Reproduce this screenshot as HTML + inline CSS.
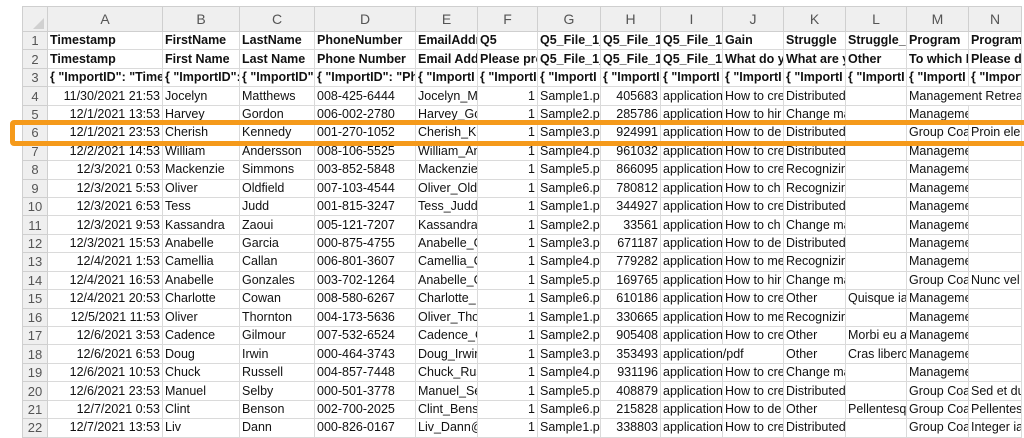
<!DOCTYPE html>
<html><head><meta charset="utf-8"><style>
body{margin:0;width:1024px;height:438px;background:#fff;overflow:hidden;position:relative;font-family:"Liberation Sans",sans-serif}
table{position:absolute;left:22px;top:6px;border-collapse:collapse;table-layout:fixed;width:999px;font-size:12.5px;color:#111}
td{border:1px solid #dadada;height:17.45px;padding:0 2px;white-space:nowrap;overflow:hidden;line-height:17px}
tr.h td{background:#efefef;color:#555;text-align:center;height:24px;font-size:14px;border-color:#cfcfcf}
td.n{background:#efefef;color:#555;text-align:center;font-size:13px;border-color:#cfcfcf}
tr.b td{font-weight:bold}
tr.b td.n{font-weight:normal}
.r{text-align:right}
.box{position:absolute;left:10px;top:120px;width:1030px;height:16px;border:5px solid #f59a1b;border-radius:4px}
.tri{position:absolute;left:33px;top:18px;width:0;height:0;border-left:11px solid transparent;border-bottom:11px solid #d0d0d0}
</style></head><body>
<table>
<colgroup><col style="width:25px"><col style="width:115px"><col style="width:77px"><col style="width:75px"><col style="width:101px"><col style="width:62px"><col style="width:60px"><col style="width:63px"><col style="width:60px"><col style="width:62px"><col style="width:61px"><col style="width:62px"><col style="width:61px"><col style="width:62px"><col style="width:53px"></colgroup>
<tr class="h"><td></td><td>A</td><td>B</td><td>C</td><td>D</td><td>E</td><td>F</td><td>G</td><td>H</td><td>I</td><td>J</td><td>K</td><td>L</td><td>M</td><td>N</td></tr>
<tr class="b"><td class="n">1</td><td>Timestamp</td><td>FirstName</td><td>LastName</td><td>PhoneNumber</td><td>EmailAddress</td><td>Q5</td><td>Q5_File_1_</td><td>Q5_File_1_</td><td>Q5_File_1_</td><td>Gain</td><td>Struggle</td><td>Struggle_O</td><td>Program</td><td>Program_</td></tr>
<tr class="b"><td class="n">2</td><td>Timestamp</td><td>First Name</td><td>Last Name</td><td>Phone Number</td><td>Email Add</td><td>Please pro</td><td>Q5_File_1_</td><td>Q5_File_1_</td><td>Q5_File_1_</td><td>What do y</td><td>What are y</td><td>Other</td><td>To which P</td><td>Please de</td></tr>
<tr class="b"><td class="n">3</td><td>{ "ImportID": "Time</td><td>{ "ImportID":</td><td>{ "ImportID"</td><td>{ "ImportID": "Ph</td><td>{ "ImportI</td><td>{ "ImportI</td><td>{ "ImportI</td><td>{ "ImportI</td><td>{ "ImportI</td><td>{ "ImportI</td><td>{ "ImportI</td><td>{ "ImportI</td><td>{ "ImportI</td><td>{ "ImportI</td></tr>
<tr><td class="n">4</td><td class="r">11/30/2021 21:53</td><td>Jocelyn</td><td>Matthews</td><td>008-425-6444</td><td>Jocelyn_M</td><td class="r">1</td><td>Sample1.p</td><td class="r">405683</td><td>application</td><td>How to cre</td><td>Distributed</td><td></td><td colspan="2">Management Retreat</td></tr>
<tr><td class="n">5</td><td class="r">12/1/2021 13:53</td><td>Harvey</td><td>Gordon</td><td>006-002-2780</td><td>Harvey_Go</td><td class="r">1</td><td>Sample2.p</td><td class="r">285786</td><td>application</td><td>How to hir</td><td>Change ma</td><td></td><td>Manageme</td><td></td></tr>
<tr><td class="n">6</td><td class="r">12/1/2021 23:53</td><td>Cherish</td><td>Kennedy</td><td>001-270-1052</td><td>Cherish_Ke</td><td class="r">1</td><td>Sample3.p</td><td class="r">924991</td><td>application</td><td>How to de</td><td>Distributed</td><td></td><td>Group Coa</td><td>Proin elem</td></tr>
<tr><td class="n">7</td><td class="r">12/2/2021 14:53</td><td>William</td><td>Andersson</td><td>008-106-5525</td><td>William_An</td><td class="r">1</td><td>Sample4.p</td><td class="r">961032</td><td>application</td><td>How to cre</td><td>Distributed</td><td></td><td>Manageme</td><td></td></tr>
<tr><td class="n">8</td><td class="r">12/3/2021 0:53</td><td>Mackenzie</td><td>Simmons</td><td>003-852-5848</td><td>Mackenzie</td><td class="r">1</td><td>Sample5.p</td><td class="r">866095</td><td>application</td><td>How to cre</td><td>Recognizin</td><td></td><td>Manageme</td><td></td></tr>
<tr><td class="n">9</td><td class="r">12/3/2021 5:53</td><td>Oliver</td><td>Oldfield</td><td>007-103-4544</td><td>Oliver_Old</td><td class="r">1</td><td>Sample6.p</td><td class="r">780812</td><td>application</td><td>How to ch</td><td>Recognizin</td><td></td><td>Manageme</td><td></td></tr>
<tr><td class="n">10</td><td class="r">12/3/2021 6:53</td><td>Tess</td><td>Judd</td><td>001-815-3247</td><td>Tess_Judd</td><td class="r">1</td><td>Sample1.p</td><td class="r">344927</td><td>application</td><td>How to cre</td><td>Distributed</td><td></td><td>Manageme</td><td></td></tr>
<tr><td class="n">11</td><td class="r">12/3/2021 9:53</td><td>Kassandra</td><td>Zaoui</td><td>005-121-7207</td><td>Kassandra_</td><td class="r">1</td><td>Sample2.p</td><td class="r">33561</td><td>application</td><td>How to ch</td><td>Change ma</td><td></td><td>Manageme</td><td></td></tr>
<tr><td class="n">12</td><td class="r">12/3/2021 15:53</td><td>Anabelle</td><td>Garcia</td><td>000-875-4755</td><td>Anabelle_G</td><td class="r">1</td><td>Sample3.p</td><td class="r">671187</td><td>application</td><td>How to de</td><td>Distributed</td><td></td><td>Manageme</td><td></td></tr>
<tr><td class="n">13</td><td class="r">12/4/2021 1:53</td><td>Camellia</td><td>Callan</td><td>006-801-3607</td><td>Camellia_C</td><td class="r">1</td><td>Sample4.p</td><td class="r">779282</td><td>application</td><td>How to me</td><td>Recognizin</td><td></td><td>Manageme</td><td></td></tr>
<tr><td class="n">14</td><td class="r">12/4/2021 16:53</td><td>Anabelle</td><td>Gonzales</td><td>003-702-1264</td><td>Anabelle_G</td><td class="r">1</td><td>Sample5.p</td><td class="r">169765</td><td>application</td><td>How to hir</td><td>Change ma</td><td></td><td>Group Coa</td><td>Nunc vel m</td></tr>
<tr><td class="n">15</td><td class="r">12/4/2021 20:53</td><td>Charlotte</td><td>Cowan</td><td>008-580-6267</td><td>Charlotte_</td><td class="r">1</td><td>Sample6.p</td><td class="r">610186</td><td>application</td><td>How to cre</td><td>Other</td><td>Quisque ia</td><td>Manageme</td><td></td></tr>
<tr><td class="n">16</td><td class="r">12/5/2021 11:53</td><td>Oliver</td><td>Thornton</td><td>004-173-5636</td><td>Oliver_Tho</td><td class="r">1</td><td>Sample1.p</td><td class="r">330665</td><td>application</td><td>How to me</td><td>Recognizin</td><td></td><td>Manageme</td><td></td></tr>
<tr><td class="n">17</td><td class="r">12/6/2021 3:53</td><td>Cadence</td><td>Gilmour</td><td>007-532-6524</td><td>Cadence_G</td><td class="r">1</td><td>Sample2.p</td><td class="r">905408</td><td>application</td><td>How to cre</td><td>Other</td><td>Morbi eu a</td><td>Manageme</td><td></td></tr>
<tr><td class="n">18</td><td class="r">12/6/2021 6:53</td><td>Doug</td><td>Irwin</td><td>000-464-3743</td><td>Doug_Irwin</td><td class="r">1</td><td>Sample3.p</td><td class="r">353493</td><td colspan="2">application/pdf</td><td>Other</td><td>Cras libero</td><td>Manageme</td><td></td></tr>
<tr><td class="n">19</td><td class="r">12/6/2021 10:53</td><td>Chuck</td><td>Russell</td><td>004-857-7448</td><td>Chuck_Rus</td><td class="r">1</td><td>Sample4.p</td><td class="r">931196</td><td>application</td><td>How to cre</td><td>Change ma</td><td></td><td>Manageme</td><td></td></tr>
<tr><td class="n">20</td><td class="r">12/6/2021 23:53</td><td>Manuel</td><td>Selby</td><td>000-501-3778</td><td>Manuel_Se</td><td class="r">1</td><td>Sample5.p</td><td class="r">408879</td><td>application</td><td>How to cre</td><td>Distributed</td><td></td><td>Group Coa</td><td>Sed et dui</td></tr>
<tr><td class="n">21</td><td class="r">12/7/2021 0:53</td><td>Clint</td><td>Benson</td><td>002-700-2025</td><td>Clint_Bens</td><td class="r">1</td><td>Sample6.p</td><td class="r">215828</td><td>application</td><td>How to de</td><td>Other</td><td>Pellentesq</td><td>Group Coa</td><td>Pellentesq</td></tr>
<tr><td class="n">22</td><td class="r">12/7/2021 13:53</td><td>Liv</td><td>Dann</td><td>000-826-0167</td><td>Liv_Dann@</td><td class="r">1</td><td>Sample1.p</td><td class="r">338803</td><td>application</td><td>How to cre</td><td>Distributed</td><td></td><td>Group Coa</td><td>Integer ia</td></tr>
</table>
<div class="tri"></div>
<div class="box"></div>
</body></html>
